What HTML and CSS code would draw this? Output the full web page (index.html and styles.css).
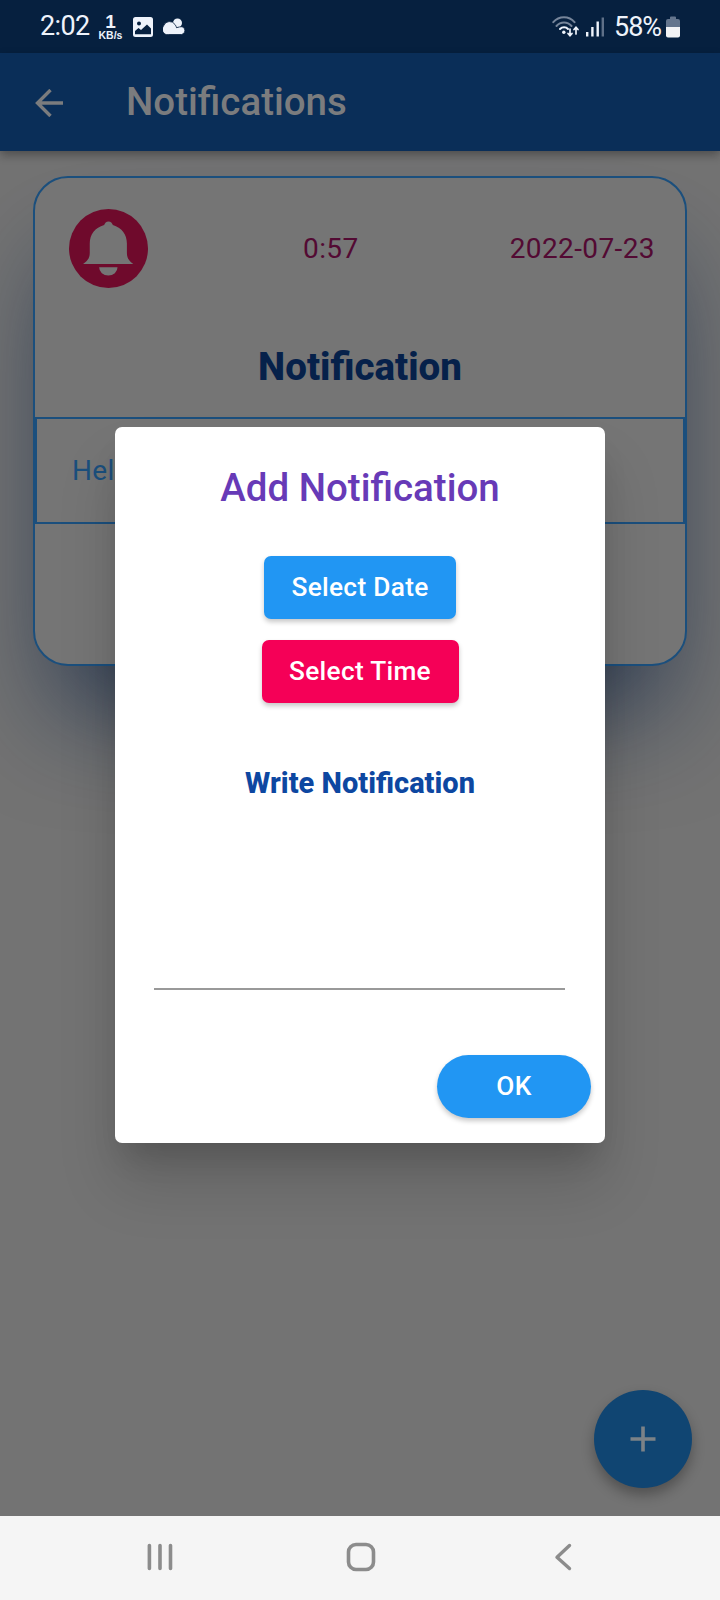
FILE: index.html
```html
<!DOCTYPE html>
<html lang="en">
<head>
<meta charset="utf-8">
<title>Notifications</title>
<link rel="stylesheet" href="styles.css">
</head>
<body>
<div class="screen">
  <header class="status">
    <div class="status-left">
      <span class="clock">2:02</span>
      <span class="speed"><b>1</b><small>KB/s</small></span>
      <svg class="photo" width="20" height="20" viewBox="0 0 20 20"><path fill-rule="evenodd" fill="#eef3fb" d="M2.500 0h15A2.500 2.500 0 0 1 20 2.500v15a2.500 2.500 0 0 1-2.500 2.500h-15A2.500 2.500 0 0 1 0 17.500v-15A2.500 2.500 0 0 1 2.500 0ZM6 4.500a2 2 0 1 0 0 4 2 2 0 0 0 0-4ZM2 17.200h16v-5.700l-4-4-6 5.500-2.500-2L2 14Z"/></svg>
      <svg class="cloud" width="22" height="17" viewBox="0 0 22 17"><circle cx="14.500" cy="5" r="4.500" fill="#eef3fb"/><path fill="#eef3fb" stroke="#06203f" stroke-width=".8" d="M5.500 16.500A5.300 5.300 0 0 1 .8 7.500 6.300 6.300 0 0 1 12 6.500q1.200 1.500 1.500 3.200 3-1 5.500-1a4 4 0 0 1-.5 7.800Z"/></svg>
    </div>
    <div class="status-right">
      <svg class="wifi" width="28" height="22" viewBox="0 0 28 22" fill="none" stroke-linecap="round"><path d="M1.300 6.200C7-.3 17-.3 22.500 6.200M4.500 10c4-4.700 11-4.700 15 0" stroke="#76859a" stroke-width="2"/><path d="M8 13c2.200-2.300 6-2.300 8 0" stroke="#eef3fb" stroke-width="2"/><circle cx="11.800" cy="16.200" r="1.700" fill="#eef3fb"/><path d="M18 13v6.500m-2-2 2 2.200 2-2.200M24 18v-6.500m-2 2 2-2.200 2 2.200" stroke="#eef3fb" stroke-width="1.700"/></svg>
      <svg class="signal" width="20" height="20" viewBox="0 0 20 20"><path d="M1 15h2.400v4.500H1zM6.200 10h2.400v9.500H6.200zM11.500 4.500h2.400v15h-2.400z" fill="#eef3fb"/><path d="M16.600.5H19v19h-2.400z" fill="#5f7088"/></svg>
      <span class="percent">58%</span>
      <svg class="battery" width="14" height="22" viewBox="0 0 14 22"><path d="M0 11V5q0-2 2-2h2V1.500Q4 .5 5 .5h4q1 0 1 1V3h2q2 0 2 2v6Z" fill="#64758d"/><path d="M0 11h14v8.500q0 2-2 2H2q-2 0-2-2Z" fill="#f2f3f5"/></svg>
    </div>
  </header>

  <nav class="appbar">
    <svg width="28" height="28" viewBox="0 0 28 28" fill="none" stroke="#7b7c7e" stroke-width="3.400"><path d="M28 14H2.500M15.500 1 2.500 14l13 13"/></svg>
    <h1>Notifications</h1>
  </nav>

  <main class="page">
    <article class="card">
      <div class="card-head">
        <svg class="bell" width="79" height="79" viewBox="0 0 236 236"><circle cx="118" cy="118" r="118" fill="#6f0a2c"/><path fill="#757575" d="M118 37c7 0 11 5 13 11 26 8 42 28 42 55v28c0 17 8 25 19 33H42c12-8 20-16 20-33v-28c0-27 16-47 43-55 2-6 6-11 13-11ZM90 174h55a27.500 25 0 0 1-55 0Z"/></svg>
        <span class="time">0:57</span>
        <span class="date">2022-07-23</span>
      </div>
      <h2>Notification</h2>
      <p class="message">Hello</p>
    </article>
    <button class="fab" aria-label="Add"><svg width="26" height="26" viewBox="0 0 26 26"><path d="M13 .5v25M.5 13h25" stroke="#7c8287" stroke-width="3.600"/></svg></button>
  </main>

  <footer class="navbar">
    <svg width="28" height="28" viewBox="0 0 28 28" fill="none" stroke="#8c8c8c" stroke-width="3.600" stroke-linecap="round"><path d="M3.400 2.500v23M14 2.500v23M24.500 2.500v23"/></svg>
    <svg class="home" width="30" height="30" viewBox="0 0 30 30" fill="none" stroke="#8c8c8c" stroke-width="3.600"><rect x="2.500" y="2.500" width="25" height="25" rx="7.500"/></svg>
    <svg width="18" height="28" viewBox="0 0 18 28" fill="none" stroke="#8c8c8c" stroke-width="3.400" stroke-linecap="round" stroke-linejoin="round"><path d="M15.500 2.500 3 14.300l12.500 11.200"/></svg>
  </footer>

  <div class="overlay">
    <section class="dialog">
      <h3>Add Notification</h3>
      <button class="btn date-btn">Select Date</button>
      <button class="btn time-btn">Select Time</button>
      <h4>Write Notification</h4>
      <div class="field"></div>
      <button class="btn ok-btn">OK</button>
    </section>
  </div>
</div>
</body>
</html>
```
FILE: styles.css
```css
* { box-sizing: border-box; margin: 0; }
body { font-family: Roboto, "Liberation Sans", sans-serif; }
svg { display: block; flex: none; }
button { border: 0; font-family: inherit; }

.screen {
  position: relative;
  width: 720px;
  height: 1600px;
  display: flex;
  flex-direction: column;
  overflow: hidden;
  background: #737373;
}

.status {
  height: 53px;
  flex: none;
  display: flex;
  justify-content: space-between;
  padding: 0 40px;
  background: #06203f;
  color: #eef3fb;
  z-index: 1;
}
.status-left, .status-right { display: flex; align-items: center; }
.clock { font-size: 27px; line-height: 55px; width: 50px; letter-spacing: -0.6px; }
.speed {
  width: 25px;
  margin-left: 8px;
  display: flex;
  flex-direction: column;
  align-items: center;
  font-family: "Liberation Sans", sans-serif;
}
.speed b { font-size: 19px; line-height: 16px; }
.speed small { font-size: 10.500px; line-height: 10px; font-weight: 700; }
.photo { margin-left: 10px; }
.cloud { margin-left: 10px; }
.signal { margin-left: 5px; }
.percent { font-size: 27px; margin-left: 9px; width: 48px; letter-spacing: -1px; white-space: nowrap; }
.battery { margin-left: 4px; }

.appbar {
  height: 98px;
  flex: none;
  display: flex;
  align-items: center;
  gap: 63px;
  padding: 0 35px 1px;
  background: #0a2e58;
  box-shadow: 0 4px 9px rgba(0, 0, 0, .32);
  z-index: 1;
}
.appbar svg { margin-top: 2px; }
.appbar h1 { font-size: 38.500px; font-weight: 500; color: #7b7c7e; }

.page { position: relative; flex: 1; padding: 25px 33px; }
.card {
  height: 490px;
  border: 2px solid #1b4f7d;
  border-radius: 35px;
  background: #757575;
  box-shadow: 0 65px 105px -22px rgba(10, 32, 66, .68);
}
.card-head {
  height: 142px;
  display: grid;
  grid-template-columns: 79px 1fr auto;
  align-items: center;
  padding: 0 30px 2px 34px;
  font-size: 28px;
  letter-spacing: .4px;
  color: #530a33;
}
.time { padding-left: 155px; }
.card h2 {
  height: 97px;
  line-height: 93px;
  text-align: center;
  font-size: 38.500px;
  font-weight: 800;
  color: #06214a;
}
.message {
  height: 107px;
  border: 2px solid #1b4f7d;
  padding-left: 35px;
  line-height: 104px;
  font-size: 28px;
  letter-spacing: .4px;
  color: #1b4f7d;
}

.fab {
  position: absolute;
  right: 28px;
  bottom: 28px;
  width: 98px;
  height: 98px;
  padding: 0;
  border-radius: 50%;
  display: grid;
  place-items: center;
  background: #104572;
  box-shadow: 0 7px 13px rgba(0, 0, 0, .3);
}

.navbar {
  height: 84px;
  flex: none;
  display: flex;
  align-items: center;
  justify-content: space-between;
  padding: 0 148px 2px 146px;
  background: #f5f5f5;
  z-index: 1;
}
.home { margin-right: 7px; }

.overlay {
  position: absolute;
  inset: 53px 0 84px;
  display: grid;
  place-items: center;
}
.dialog {
  width: 490px;
  height: 716px;
  border-radius: 7px;
  background: #fff;
  display: flex;
  flex-direction: column;
  align-items: center;
  box-shadow: 0 42px 60px rgba(0, 0, 0, .14), 0 20px 30px -10px rgba(0, 0, 0, .16);
}
.dialog h3 {
  margin-top: 38px;
  line-height: 45px;
  font-size: 38.500px;
  font-weight: 500;
  color: #673ab7;
}
.btn {
  height: 63px;
  padding: 0;
  border-radius: 7px;
  font-size: 26.250px;
  font-weight: 500;
  letter-spacing: .3px;
  color: #fff;
  box-shadow: 0 3px 5px rgba(0, 0, 0, .22);
}
.date-btn { width: 192px; margin-top: 46px; background: #2196f3; }
.time-btn { width: 197px; margin-top: 21px; background: #f50057; }
.dialog h4 {
  margin-top: 63px;
  line-height: 34px;
  font-size: 29px;
  font-weight: 800;
  color: #0d47a1;
}
.field { width: 411px; height: 190px; margin-right: 1px; border-bottom: 2px solid #999; }
.ok-btn {
  align-self: flex-end;
  width: 154px;
  margin: 65px 14px 0 0;
  border-radius: 32px;
  background: #2196f3;
}
```
